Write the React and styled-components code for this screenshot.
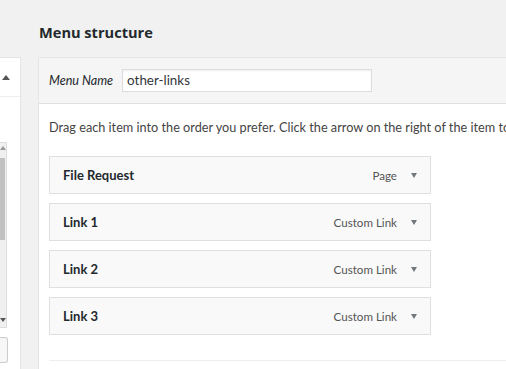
import React from "react";
import styled, { createGlobalStyle } from "styled-components";

const menuItems = [
  { id: 1, title: "File Request", type: "Page" },
  { id: 2, title: "Link 1", type: "Custom Link" },
  { id: 3, title: "Link 2", type: "Custom Link" },
  { id: 4, title: "Link 3", type: "Custom Link" }
];

const GlobalStyle = createGlobalStyle`
  html, body {
    margin: 0;
    padding: 0;
    background: #f1f1f1;
    overflow: hidden;
  }
  body {
    font-family: Lato, "Open Sans", sans-serif;
    font-size: 13px;
    color: #23282d;
  }
`;

const Styled = {
  Page: styled.div`
    display: grid;
    grid-template-columns: 21px 1fr;
    column-gap: 17px;
    width: 506px;
    height: 369px;
    overflow: hidden;
  `,

  SidePanel: styled.div`
    margin-top: 57px;
    display: flex;
    flex-direction: column;
  `,

  SideBox: styled.div`
    background: #fff;
    border: 1px solid #e5e5e5;
    border-left: none;
    display: flex;
    flex-direction: column;
  `,

  SideHead: styled.div`
    height: 38px;
    display: flex;
    align-items: center;
    padding-left: 2px;
    border-bottom: 1px solid #eee;
    background: #fff;
  `,

  UpArrow: styled.span`
    width: 0;
    height: 0;
    border-left: 4px solid transparent;
    border-right: 4px solid transparent;
    border-bottom: 5px solid #555;
  `,

  SideBody: styled.div`
    padding: 45px 0 10px 0;
  `,

  ScrollBar: styled.div`
    width: 6px;
    height: 184px;
    border: 1px solid #ddd;
    border-left: none;
    background: #f0f0f0;
    display: flex;
    flex-direction: column;
    align-items: flex-start;
  `,

  ScrollUp: styled.span`
    margin-top: 3px;
    width: 0;
    height: 0;
    border-left: 3px solid transparent;
    border-right: 3px solid transparent;
    border-bottom: 4px solid #999;
  `,

  ScrollThumb: styled.div`
    margin-top: 8px;
    width: 5px;
    height: 82px;
    background: #c1c1c1;
  `,

  ScrollDown: styled.span`
    margin-top: auto;
    margin-bottom: 5px;
    width: 0;
    height: 0;
    border-left: 3px solid transparent;
    border-right: 3px solid transparent;
    border-top: 4px solid #555;
  `,

  SideButton: styled.div`
    margin-top: 9px;
    width: 7px;
    height: 24px;
    border: 1px solid #ccc;
    border-left: none;
    border-radius: 0 3px 3px 0;
    background: #f7f7f7;
  `,

  Main: styled.div`
    display: flex;
    flex-direction: column;
  `,

  Title: styled.h2`
    margin: 0;
    height: 57px;
    padding-top: 22px;
    box-sizing: border-box;
    padding-left: 1px;
    font-family: "Open Sans", sans-serif;
    font-size: 14.6px;
    font-weight: 700;
    color: #23282d;
    line-height: 20px;
  `,

  MenuBox: styled.div`
    flex: 1;
    border: 1px solid #e5e5e5;
    border-right: none;
    background: #fff;
  `,

  MenuHeader: styled.div`
    height: 45px;
    display: flex;
    align-items: center;
    padding-left: 10px;
    background: #f5f5f5;
    border-bottom: 1px solid #dfdfdf;
    gap: 9px;
  `,

  NameLabel: styled.label`
    font-style: italic;
    font-size: 12.6px;
    color: #23282d;
  `,

  NameInput: styled.div`
    width: 240px;
    height: 19px;
    padding: 1px 4px;
    background: #fff;
    border: 1px solid #ddd;
    box-shadow: inset 0 1px 2px rgba(0, 0, 0, 0.07);
    font-size: 13.4px;
    line-height: 19px;
    color: #32373c;
  `,

  MenuBody: styled.div`
    padding: 14px 0 0 10px;
  `,

  Instructions: styled.p`
    margin: 0 0 20px 0;
    white-space: nowrap;
    overflow: hidden;
    font-size: 12.7px;
    line-height: 18px;
    color: #444;
  `,

  ItemList: styled.ul`
    list-style: none;
    margin: 0;
    padding: 0;
    display: flex;
    flex-direction: column;
    gap: 9px;
  `,

  Item: styled.li`
    width: 380px;
    height: 36px;
    box-sizing: content-box;
    border: 1px solid #dfdfdf;
    background: #f9f9f9;
    display: flex;
    align-items: center;
    padding: 0;
  `,

  ItemTitle: styled.span`
    padding-left: 13px;
    font-weight: 700;
    font-size: 13px;
    color: #23282d;
  `,

  ItemType: styled.span`
    margin-left: auto;
    font-size: 11.6px;
    color: #555;
  `,

  ItemArrow: styled.span`
    margin: 0 13px 0 14px;
    width: 0;
    height: 0;
    border-left: 3.5px solid transparent;
    border-right: 3.5px solid transparent;
    border-top: 5px solid #72777c;
  `,

  Divider: styled.hr`
    margin: 25px 0 0 0;
    border: none;
    border-top: 1px solid #eee;
  `
};

function App() {
  return (
    <>
      <GlobalStyle />
      <Styled.Page>
        <Styled.SidePanel>
          <Styled.SideBox>
            <Styled.SideHead>
              <Styled.UpArrow />
            </Styled.SideHead>
            <Styled.SideBody>
              <Styled.ScrollBar>
                <Styled.ScrollUp />
                <Styled.ScrollThumb />
                <Styled.ScrollDown />
              </Styled.ScrollBar>
              <Styled.SideButton />
            </Styled.SideBody>
          </Styled.SideBox>
        </Styled.SidePanel>

        <Styled.Main>
          <Styled.Title>Menu structure</Styled.Title>
          <Styled.MenuBox>
            <Styled.MenuHeader>
              <Styled.NameLabel>Menu Name</Styled.NameLabel>
              <Styled.NameInput>other-links</Styled.NameInput>
            </Styled.MenuHeader>
            <Styled.MenuBody>
              <Styled.Instructions>
                Drag each item into the order you prefer. Click the arrow on
                the right of the item to reveal additional configuration
                options.
              </Styled.Instructions>
              <Styled.ItemList>
                {menuItems.map(item => (
                  <Styled.Item key={item.id}>
                    <Styled.ItemTitle>{item.title}</Styled.ItemTitle>
                    <Styled.ItemType>{item.type}</Styled.ItemType>
                    <Styled.ItemArrow />
                  </Styled.Item>
                ))}
              </Styled.ItemList>
              <Styled.Divider />
            </Styled.MenuBody>
          </Styled.MenuBox>
        </Styled.Main>
      </Styled.Page>
    </>
  );
}

export default App;
